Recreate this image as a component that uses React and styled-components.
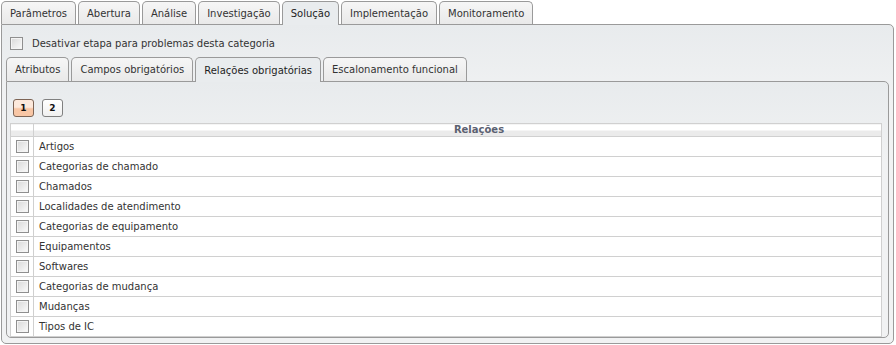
import React from "react";
import styled, { createGlobalStyle } from "styled-components";

const GlobalStyle = createGlobalStyle`
  html, body {
    margin: 0;
    padding: 0;
    background: #ffffff;
  }
  body {
    font-family: "DejaVu Sans", Verdana, sans-serif;
    font-size: 10px;
    color: #333;
  }
`;

const Page = styled.div`
  padding: 1px 2px 0 1px;
`;

const TabBar = styled.div`
  display: flex;
  gap: 2px;
  align-items: flex-end;
  position: relative;
  z-index: 1;
`;

const Tab = styled.div`
  height: ${(p) => (p.$height || 22) + (p.$active ? 1 : 0)}px;
  display: flex;
  align-items: center;
  padding: 0 8px;
  border: 1px solid #9a9a9a;
  border-bottom: none;
  border-radius: 5px 5px 0 0;
  margin-bottom: ${(p) => (p.$active ? -1 : 0)}px;
  background: ${(p) =>
    p.$active ? "#e9ecee" : "linear-gradient(#f6f6f6, #e9e9e9)"};
  color: ${(p) => (p.$active ? "#1e1e1e" : "#333")};
  white-space: nowrap;
  cursor: default;
`;

const Panel = styled.div`
  border: 1px solid #9a9a9a;
  border-radius: 0 5px 5px 5px;
  background: linear-gradient(#e8ebed, #f1f2f3 80px, #f1f2f3);
  padding: ${(p) => p.$padding};
`;

const CheckRow = styled.label`
  display: flex;
  align-items: center;
  gap: 9px;
  height: 14px;
  margin: 0 0 7px 4px;
  color: #333;
`;

const Box = styled.span`
  display: block;
  width: 11px;
  height: 11px;
  border: 1px solid #8f8f8f;
  background: linear-gradient(135deg, #d8d8d8, #fbfbfb);
  box-shadow: inset 0 0 0 1px #f4f4f4;
  flex: none;
`;

const Pager = styled.div`
  display: flex;
  gap: 8px;
  margin: 0 0 6px 6px;
`;

const PageButton = styled.div`
  width: 19px;
  height: 16px;
  border: 1px solid ${(p) => (p.$active ? "#7d6455" : "#808080")};
  border-radius: 3px;
  background: ${(p) =>
    p.$active
      ? "linear-gradient(#fde9dc 0%, #fde9dc 45%, #f8c6a5 55%, #f8c6a5 100%)"
      : "linear-gradient(#ffffff, #f0f0f0)"};
  display: flex;
  align-items: center;
  justify-content: center;
  font-weight: bold;
  font-size: 9px;
  color: #111;
`;

const Table = styled.table`
  width: 872px;
  margin-left: 3px;
  border-collapse: collapse;
  background: #fff;
  table-layout: fixed;
`;

const HeadCell = styled.th`
  height: 12px;
  padding: 0 0 0 ${(p) => p.$indent || 0}px;
  border: 1px solid #d0d0d0;
  background: linear-gradient(#ffffff 0%, #ffffff 50%, #ebebeb 50%, #ebebeb 100%);
  font-weight: bold;
  font-size: 10px;
  line-height: 12px;
  color: #5b6171;
  text-align: center;
`;

const Cell = styled.td`
  height: 19px;
  padding: 0 0 0 5px;
  border: 1px solid #d0d0d0;
  vertical-align: middle;
  color: #333;
`;

const Row = styled.tr``;

const relations = [
  "Artigos",
  "Categorias de chamado",
  "Chamados",
  "Localidades de atendimento",
  "Categorias de equipamento",
  "Equipamentos",
  "Softwares",
  "Categorias de mudança",
  "Mudanças",
  "Tipos de IC",
];

const outerTabs = [
  "Parâmetros",
  "Abertura",
  "Análise",
  "Investigação",
  "Solução",
  "Implementação",
  "Monitoramento",
];

const innerTabs = [
  "Atributos",
  "Campos obrigatórios",
  "Relações obrigatórias",
  "Escalonamento funcional",
];

const App = () => {
  return (
    <Page>
      <GlobalStyle />
      <TabBar>
        {outerTabs.map((t) => (
          <Tab key={t} $active={t === "Solução"}>
            {t}
          </Tab>
        ))}
      </TabBar>
      <Panel $padding="11px 4px 5px 4px">
        <CheckRow>
          <Box />
          Desativar etapa para problemas desta categoria
        </CheckRow>
        <TabBar>
          {innerTabs.map((t) => (
            <Tab key={t} $height={23} $active={t === "Relações obrigatórias"}>
              {t}
            </Tab>
          ))}
        </TabBar>
        <Panel $padding="17px 0 0 0">
          <Pager>
            <PageButton $active>1</PageButton>
            <PageButton>2</PageButton>
          </Pager>
          <Table>
            <colgroup>
              <col style={{ width: 23 }} />
              <col />
            </colgroup>
            <thead>
              <Row>
                <HeadCell />
                <HeadCell $indent={43}>Relações</HeadCell>
              </Row>
            </thead>
            <tbody>
              {relations.map((r) => (
                <Row key={r}>
                  <Cell>
                    <Box />
                  </Cell>
                  <Cell>{r}</Cell>
                </Row>
              ))}
            </tbody>
          </Table>
        </Panel>
      </Panel>
    </Page>
  );
};

export default App;
